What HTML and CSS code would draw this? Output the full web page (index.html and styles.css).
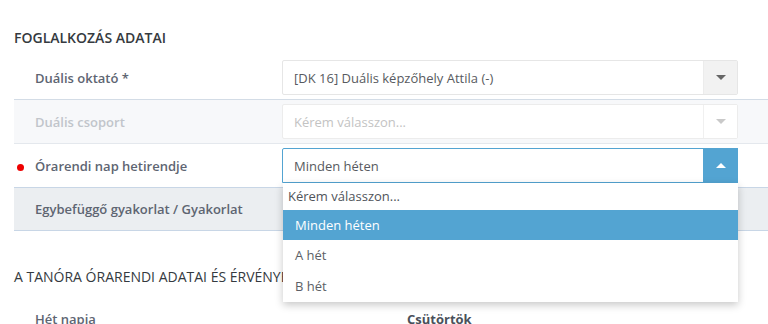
FILE: index.html
```html
<!DOCTYPE html>
<html lang="hu">
<head>
<meta charset="utf-8">
<title>Foglalkozás adatai</title>
<link rel="stylesheet" href="styles.css">
</head>
<body>
<div class="page">
  <section class="section first">
    <h2 class="section-title strong">FOGLALKOZÁS ADATAI</h2>
    <div class="row">
      <div class="label">Duális oktató *</div>
      <div class="select">
        <span class="value">[DK 16] Duális képzőhely Attila (-)</span>
        <span class="arrow-btn"><span class="caret down"></span></span>
      </div>
    </div>
    <div class="row disabled">
      <div class="label">Duális csoport</div>
      <div class="select">
        <span class="value placeholder">Kérem válasszon...</span>
        <span class="arrow-btn"><span class="caret down"></span></span>
      </div>
    </div>
    <div class="row">
      <div class="label"><span class="dot"></span>Órarendi nap hetirendje</div>
      <div class="select open">
        <span class="value">Minden héten</span>
        <span class="arrow-btn"><span class="caret up"></span></span>
        <ul class="dropdown">
          <li class="opt opt-placeholder">Kérem válasszon...</li>
          <li class="opt selected">Minden héten</li>
          <li class="opt">A hét</li>
          <li class="opt">B hét</li>
        </ul>
      </div>
    </div>
    <div class="row grey">
      <div class="label">Egybefüggő gyakorlat / Gyakorlat</div>
    </div>
  </section>
  <section class="section second">
    <h2 class="section-title">A TANÓRA ÓRARENDI ADATAI ÉS ÉRVÉNYESSÉGE</h2>
    <div class="info-row">
      <div class="info-label">Hét napja</div>
      <div class="info-value">Csütörtök</div>
    </div>
  </section>
</div>
</body>
</html>
```

FILE: styles.css
```css
* { box-sizing: border-box; }
html, body {
  margin: 0;
  padding: 0;
  background: #ffffff;
  overflow: hidden;
}
body {
  font-family: "Open Sans", "Liberation Sans", sans-serif;
  font-size: 13px;
  color: #555b66;
}
.page {
  padding-left: 14px;
  width: 768px;
}
.section.first {
  padding-top: 28px;
}
.section-title {
  margin: 0;
  font-size: 14px;
  line-height: 20px;
  font-weight: 400;
  color: #353a40;
  white-space: nowrap;
}
.section-title.strong {
  font-weight: 600;
  margin-bottom: 8px;
}
.row {
  display: flex;
  align-items: center;
  padding: 4px 30px 4px 21px;
  border-bottom: 1px solid #d3dce6;
  min-height: 44px;
}
.label {
  width: 247px;
  flex: none;
  font-weight: 600;
  color: #5e6572;
  position: relative;
}
.dot {
  position: absolute;
  left: -18px;
  top: 7px;
  width: 7px;
  height: 7px;
  border-radius: 50%;
  background: #ee0000;
}
.select {
  position: relative;
  flex: none;
  width: 456px;
  height: 35px;
  display: flex;
  align-items: center;
  background: #fff;
  border: 1px solid #e6e6e6;
  border-radius: 2px;
}
.value {
  flex: 1;
  padding-left: 11px;
  color: #575a60;
  white-space: nowrap;
}
.arrow-btn {
  flex: none;
  width: 34px;
  align-self: stretch;
  display: flex;
  align-items: center;
  justify-content: center;
  background: #f2f2f2;
  border-left: 1px solid #ececec;
}
.caret {
  width: 0;
  height: 0;
  border-left: 5px solid transparent;
  border-right: 5px solid transparent;
}
.caret.down { border-top: 5px solid #666666; }
.caret.up { border-bottom: 5px solid #ffffff; }

.row.disabled {
  background: #f7f8fa;
  border-bottom-color: #e4e8ed;
}
.row.disabled .label { color: #c1c5cb; }
.row.disabled .select { border-color: #ececec; }
.row.disabled .value.placeholder { color: #c3c3c3; }
.row.disabled .arrow-btn { background: #ffffff; border-left-color: #f0f0f0; }
.row.disabled .caret.down { border-top-color: #c9c9c9; }

.select.open {
  border-color: #53a4d2;
  border-radius: 2px 2px 0 0;
}
.select.open .arrow-btn {
  background: #53a4d2;
  border-left: none;
  margin: -1px -1px -1px 0;
  width: 35px;
}

.dropdown {
  position: absolute;
  top: calc(100% + 1px);
  left: 0;
  width: 455px;
  margin: 0;
  padding: 0;
  list-style: none;
  background: #fff;
  box-shadow: 0 3px 8px rgba(0, 0, 0, 0.22);
  z-index: 10;
}
.opt {
  height: 31px;
  line-height: 31px;
  padding-left: 12px;
  color: #5c5f66;
  white-space: nowrap;
}
.opt-placeholder {
  height: 27px;
  line-height: 27px;
  padding-left: 5px;
  color: #50545a;
}
.opt.selected {
  height: 30px;
  line-height: 30px;
  background: #53a4d2;
  color: #ffffff;
}

.row.grey {
  background: #ebeef1;
  border-top: 1px solid #c8d6e6;
  border-bottom: 1px solid #c8d6e6;
  margin-top: -1px;
}
.row.grey .label { width: auto; }

.section.second {
  padding-top: 36px;
}
.info-row {
  display: flex;
  padding: 22px 0 0 21px;
  line-height: 20px;
}
.info-label {
  width: 372px;
  flex: none;
  font-weight: 600;
  color: #5e6572;
}
.info-value {
  font-weight: 700;
  color: #4a505a;
}
```
